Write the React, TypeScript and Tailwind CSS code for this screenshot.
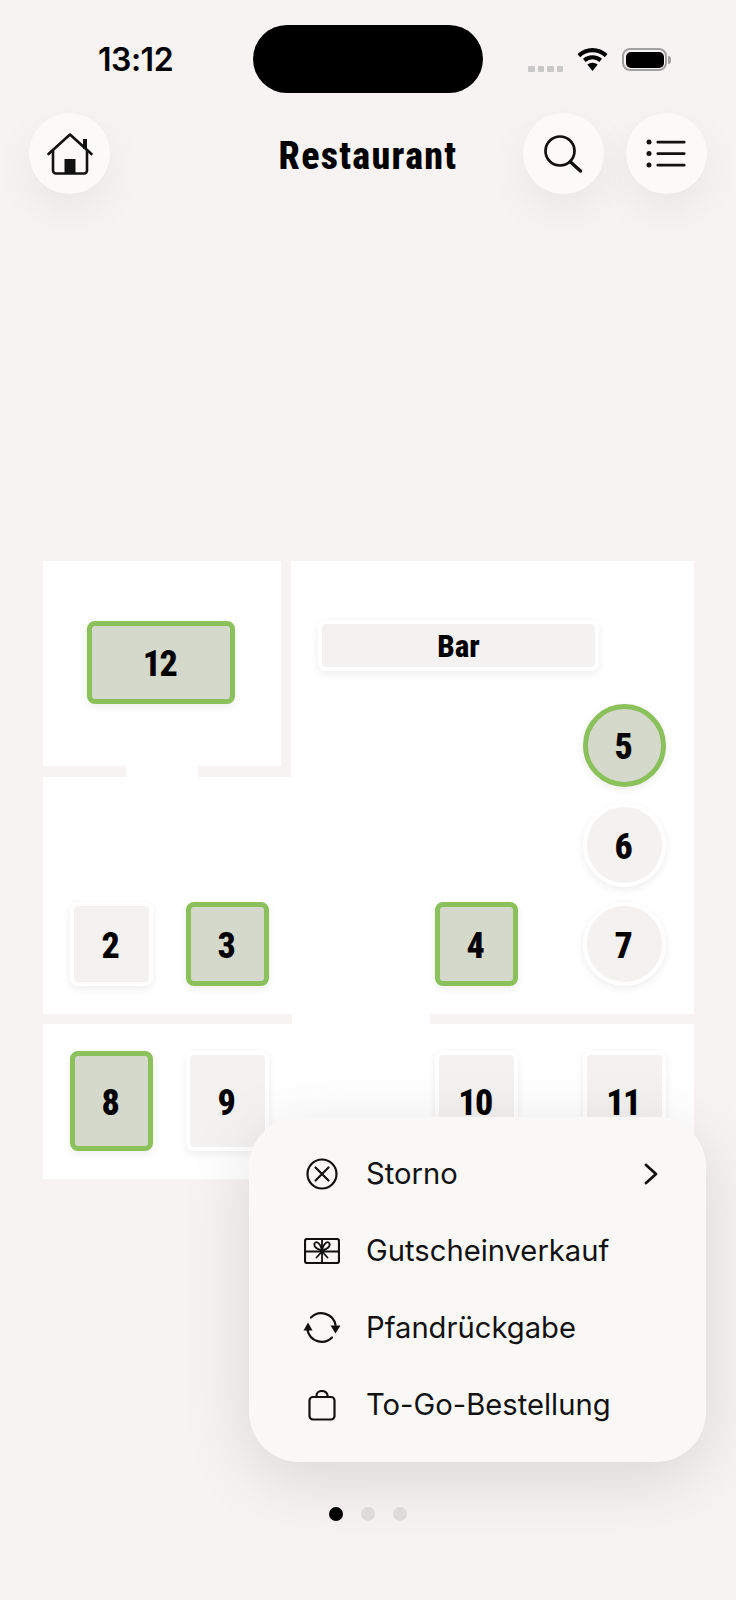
const narrow = '[font-family:"Liberation_Sans_Narrow","Roboto_Condensed","Liberation_Sans",sans-serif]';
const roundButton =
  'flex h-[81px] w-[81px] items-center justify-center rounded-full bg-[#fbfaf8] shadow-[0_16px_44px_rgba(0,0,0,0.06)]';

type TableProps = {
  label: string;
  className: string;
  active?: boolean;
  round?: boolean;
};

function Table({ label, className, active, round }: TableProps) {
  return (
    <div
      className={`absolute flex items-center justify-center pt-[3px] pr-[3px] text-[36px] font-extrabold tracking-[-1.5px] text-black shadow-[0_3px_8px_rgba(0,0,0,0.07)] ${narrow} ${
        round ? 'rounded-full' : 'rounded-[8px]'
      } ${active ? 'border-[5px] border-[#8bc15a] bg-[#d4d9cc]' : 'border-4 border-white bg-[#f3f2f0]'} ${className}`}
    >
      {label}
    </div>
  );
}

function HomeIcon() {
  return (
    <svg width="46" height="42" viewBox="0 0 46 42" fill="none" stroke="#111" strokeWidth="2.6" strokeLinecap="round" strokeLinejoin="round">
      <path d="M1.500 21 23 1.500 44.500 21" />
      <path d="M6 17v20.500A3 3 0 0 0 9 40.500h28a3 3 0 0 0 3-3V17" />
      <rect x="36" y="6" width="4" height="10" fill="#111" stroke="none" />
      <rect x="17.500" y="26" width="11" height="15" fill="#111" stroke="none" />
    </svg>
  );
}

function SearchIcon() {
  return (
    <svg width="39" height="38" viewBox="0 0 39 38" fill="none" stroke="#111" strokeLinecap="round">
      <circle cx="16" cy="16" r="14.500" strokeWidth="2.700" />
      <path d="m26.500 27 10 9" strokeWidth="3.400" />
    </svg>
  );
}

function ListIcon() {
  return (
    <svg width="40" height="29" viewBox="0 0 40 29" fill="#111" className="-ml-[2px]">
      <circle cx="3" cy="3" r="2.500" />
      <circle cx="3" cy="14.500" r="2.500" />
      <circle cx="3" cy="26" r="2.500" />
      <rect x="10.500" y="1.700" width="29" height="2.700" rx="1.200" />
      <rect x="10.500" y="13.200" width="29" height="2.700" rx="1.200" />
      <rect x="10.500" y="24.700" width="29" height="2.700" rx="1.200" />
    </svg>
  );
}

function CancelIcon() {
  return (
    <svg width="32" height="32" viewBox="0 0 32 32" fill="none" stroke="#111" strokeWidth="2.200" strokeLinecap="round">
      <circle cx="16" cy="16" r="14.500" />
      <path d="m9.500 9.500 13 13M22.500 9.500l-13 13" />
    </svg>
  );
}

function VoucherIcon() {
  return (
    <svg width="36" height="26" viewBox="0 0 36 26" fill="none" stroke="#111" strokeWidth="1.800" strokeLinecap="round" strokeLinejoin="round">
      <rect x="1" y="1" width="34" height="24" rx="2" strokeWidth="2.200" />
      <path d="M1 13.500h34M18 1v24" />
      <path d="M18 12.500C13 11.500 9.500 8.500 10.500 5.500 11.500 3 16 3.500 18 12.500Z" />
      <path d="M18 12.500C23 11.500 26.500 8.500 25.500 5.500 24.500 3 20 3.500 18 12.500Z" />
      <path d="m18 13.500-5.500 6M18 13.500l5.500 6" />
    </svg>
  );
}

function ReturnIcon() {
  return (
    <svg width="38" height="32" viewBox="0 0 38 32" fill="none" stroke="#111" strokeWidth="2.200" strokeLinecap="round">
      <path d="M8 5.500A14.500 14.500 0 0 1 32.500 13" />
      <path d="M4.500 18A14.500 14.500 0 0 0 29 25.500" />
      <path d="M5 10.500 0.500 18.500h9Z" fill="#111" stroke="none" />
      <path d="M32.500 21.500 37.500 13.500h-10Z" fill="#111" stroke="none" />
    </svg>
  );
}

function BagIcon() {
  return (
    <svg width="28" height="31" viewBox="0 0 28 31" fill="none" stroke="#111" strokeWidth="2.200" strokeLinejoin="round">
      <rect x="1.500" y="7" width="25" height="22.500" rx="3.500" />
      <path d="M8.500 7V5.500a5.500 4.500 0 0 1 11 0V7" />
    </svg>
  );
}

const menuItems = [
  { label: 'Storno', icon: <CancelIcon /> },
  { label: 'Gutscheinverkauf', icon: <VoucherIcon /> },
  { label: 'Pfandrückgabe', icon: <ReturnIcon /> },
  { label: 'To-Go-Bestellung', icon: <BagIcon /> },
];

export default function App() {
  return (
    <div className="relative h-[1600px] w-[736px] overflow-hidden bg-[#f7f3f2] [font-family:Inter,'Liberation_Sans',sans-serif]">
      {/* Status bar */}
      <div className="flex h-[113px] items-start">
        <div className="mt-[42px] w-[253px] pl-[98px] text-[32px] leading-[36px] font-semibold tracking-[-0.5px] text-black">
          13:12
        </div>
        <div className="mt-[25px] h-[68px] w-[230px] rounded-full bg-black" />
        <div className="mt-[48px] ml-[45px] flex h-[23px] items-center">
          <div className="mt-[18px] flex gap-[3px]">
            {[0, 1, 2, 3].map((i) => (
              <span key={i} className="h-[6px] w-[6.500px] rounded-[1px] bg-[#c8c8c8]" />
            ))}
          </div>
          <svg className="ml-[14px]" width="31" height="23" viewBox="0 0 30 23" fill="#000">
            <path d="M15 23 9.800 16.600a8 8 0 0 1 10.400 0Z" />
            <path d="M15 7.200c3.800 0 7 1.400 9.500 3.600l-2.600 3.100a10.500 10.500 0 0 0-13.800 0L5.500 10.800C8 8.600 11.200 7.200 15 7.200Z" />
            <path d="M15 0c5.700 0 10.800 2.200 15 6l-2.700 3.300A18 18 0 0 0 15 4.300 18 18 0 0 0 2.700 9.300L0 6c4.200-3.800 9.300-6 15-6Z" />
          </svg>
          <div className="ml-[14px] flex items-center">
            <div className="flex h-[23px] w-[45px] rounded-[8px] border-2 border-[#a0a0a0] p-[1.500px]">
              <div className="flex-1 rounded-[5px] bg-black" />
            </div>
            <div className="ml-[1px] h-[8px] w-[3px] rounded-r-full bg-[#a0a0a0]" />
          </div>
        </div>
      </div>

      {/* Header */}
      <div className="grid h-[81px] grid-cols-[1fr_auto_1fr] items-center px-[29px]">
        <div className={roundButton}>
          <HomeIcon />
        </div>
        <h1 className={`pt-[6px] text-[38px] font-extrabold tracking-[1.3px] text-black ${narrow}`}>Restaurant</h1>
        <div className="flex justify-end gap-[22px]">
          <div className={roundButton}>
            <SearchIcon />
          </div>
          <div className={roundButton}>
            <ListIcon />
          </div>
        </div>
      </div>

      {/* Floor plan: walls and tables sit at their spot on the plan */}
      <div className="relative mt-[367px] ml-[43px] h-[618px] w-[651px] bg-white">
        <div className="absolute top-0 left-[238px] h-[216px] w-[10px] bg-[#f7f3f2]" />
        <div className="absolute top-[205px] left-0 h-[11px] w-[83px] bg-[#f7f3f2]" />
        <div className="absolute top-[205px] left-[155px] h-[11px] w-[93px] bg-[#f7f3f2]" />
        <div className="absolute top-[453px] left-0 h-[10px] w-[249px] bg-[#f7f3f2]" />
        <div className="absolute top-[453px] left-[387px] h-[10px] w-[264px] bg-[#f7f3f2]" />

        <Table label="12" active className="top-[60px] left-[44px] h-[83px] w-[148px]" />
        <Table label="Bar" className="top-[59px] left-[275px] h-[51px] w-[281px] !pr-0 !text-[31px] !tracking-normal" />
        <Table label="5" active round className="top-[143px] left-[540px] h-[83px] w-[83px]" />
        <Table label="6" round className="top-[242px] left-[540px] h-[84px] w-[83px]" />
        <Table label="7" round className="top-[341px] left-[540px] h-[84px] w-[83px]" />
        <Table label="2" className="top-[341px] left-[27px] h-[84px] w-[83px]" />
        <Table label="3" active className="top-[341px] left-[143px] h-[84px] w-[83px]" />
        <Table label="4" active className="top-[341px] left-[392px] h-[84px] w-[83px]" />
        <Table label="8" active className="top-[490px] left-[27px] h-[100px] w-[83px]" />
        <Table label="9" className="top-[490px] left-[143px] h-[100px] w-[83px]" />
        <Table label="10" className="top-[490px] left-[392px] h-[100px] w-[83px]" />
        <Table label="11" className="top-[490px] left-[540px] h-[100px] w-[83px]" />
      </div>

      {/* Context menu over the floor plan */}
      <div className="absolute top-[1117px] left-[249px] flex h-[345px] w-[457px] flex-col justify-center rounded-[50px] bg-[#f9f8f6] shadow-[0_16px_70px_rgba(0,0,0,0.12)]">
        {menuItems.map((item, index) => (
          <div key={item.label} className="flex h-[77px] items-center text-[29.200px] text-[#111]">
            <div className="mr-[14px] ml-[43px] flex w-[60px] justify-center">{item.icon}</div>
            <span className="flex-1">{item.label}</span>
            {index === 0 && (
              <svg className="mr-[47px]" width="16" height="22" viewBox="0 0 16 22" fill="none" stroke="#111" strokeWidth="2.800" strokeLinecap="round" strokeLinejoin="round">
                <path d="m3 2 10 9-10 9" />
              </svg>
            )}
          </div>
        ))}
      </div>

      {/* Page dots */}
      <div className="absolute top-[1507px] left-[329px] flex gap-[18px]">
        <span className="h-[14px] w-[14px] rounded-full bg-black" />
        <span className="h-[14px] w-[14px] rounded-full bg-[#dcdbda]" />
        <span className="h-[14px] w-[14px] rounded-full bg-[#dcdbda]" />
      </div>
    </div>
  );
}
